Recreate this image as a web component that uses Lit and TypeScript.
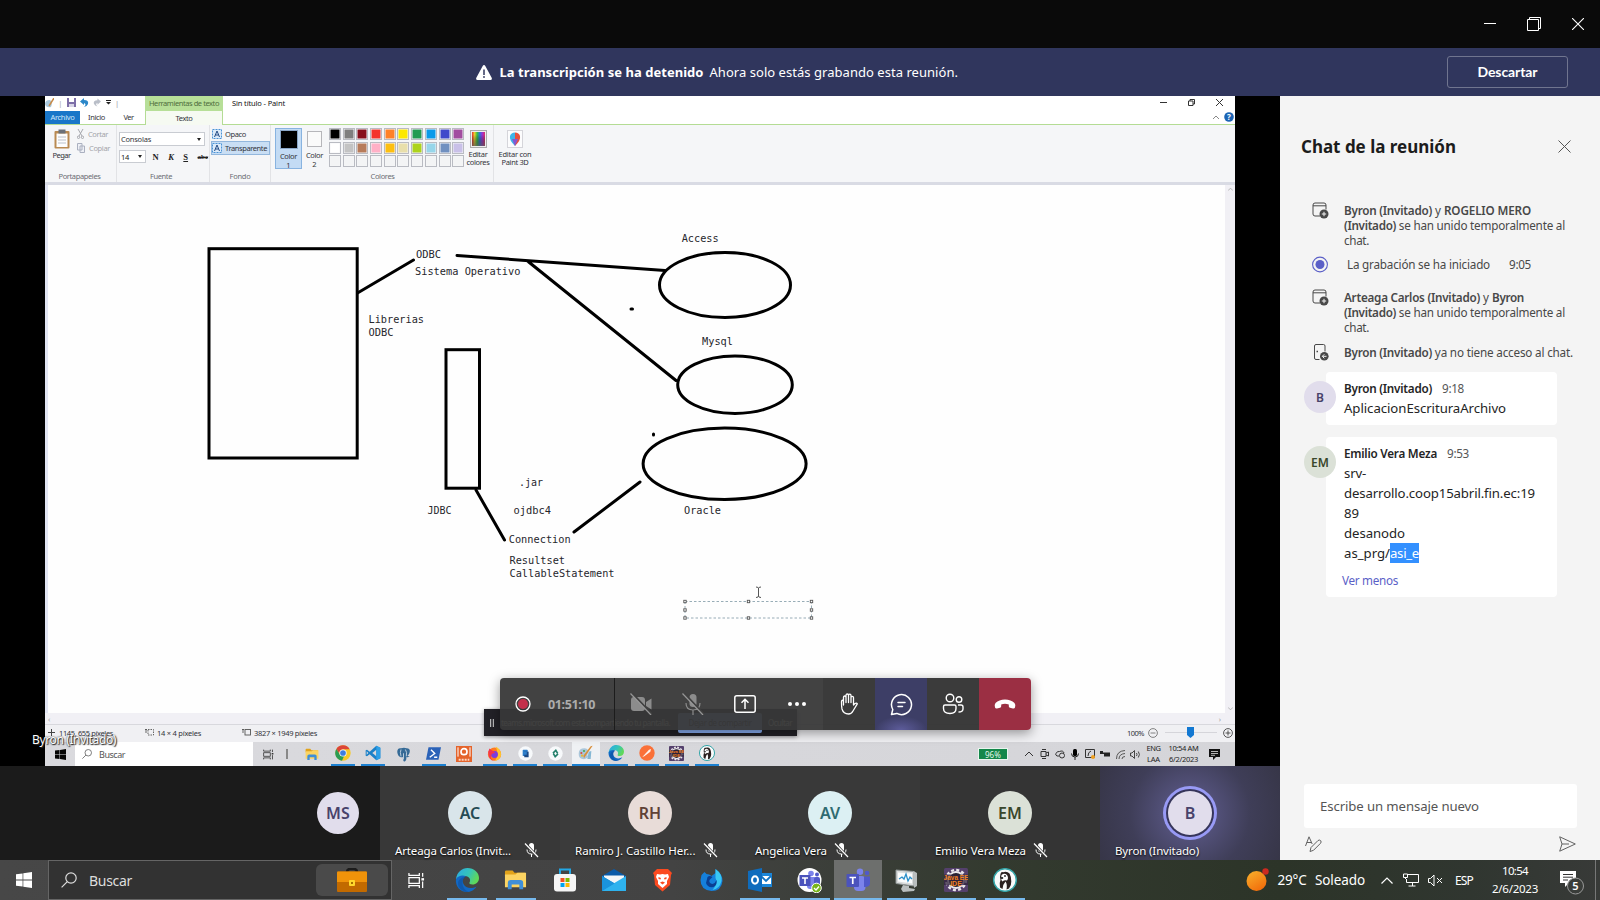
import { LitElement, html, svg, css } from "lit";

/** Text set to a given width: the letter spacing is derived from the natural width. */
class FitText extends LitElement {
  static properties = { text: { type: String }, w: { type: Number } };
  declare text: string;
  declare w: number;
  static styles = css`
    :host { display: inline-block; white-space: pre; flex: none; }
    .in { display: inline-block; }
  `;
  updated() {
    const el = this.renderRoot.querySelector(".in") as HTMLElement;
    el.style.letterSpacing = "0px";
    const n = el.getBoundingClientRect().width;
    if (this.w) el.style.letterSpacing = (this.w - n) / this.text.length + "px";
  }
  render() {
    return html`<span class="in">${this.text}</span>`;
  }
}
customElements.define("fit-text", FitText);

const f = (text: string, w = 0, cls = "") => html`<fit-text class=${cls} .text=${text} .w=${w}></fit-text>`;

const label = (text: string, x: number, y: number, w: number) =>
  svg`<text x=${x} y=${y} textLength=${w} lengthAdjust="spacingAndGlyphs">${text}</text>`;

const edge = (s: number) => html`<svg width=${s} height=${s} viewBox="0 0 24 24">
  <defs><linearGradient id="e1" x1="0" y1="0" x2="1" y2=".4"><stop offset="0" stop-color="#2aa9e8"/><stop offset=".6" stop-color="#35c4b8"/><stop offset="1" stop-color="#5fd85a"/></linearGradient></defs>
  <path d="M1 11C2 4 7 0 12.500 0C19 0 24 4.500 24 10C24 14 21 16.500 17.500 16.500C15 16.500 14 15.500 14.500 14.500C16 12 14.500 8 10 8C5 8 1.500 10 1 13Z" fill="url(#e1)"/>
  <path d="M1 11C3 7.500 8 6.500 11 8.300C8 9.500 7 13 8.500 16C10.500 20 16 21.500 21.500 18.500C19 22.500 15.500 24 12 24C5 24 0 18 1 11Z" fill="#1268c3"/>
  <path d="M8.500 11C6 15 8 22 14 23.800C9 24.500 3 21 3 15.500C3 12 6 9 10.500 9Z" fill="#0d4f9e" opacity=".6"/></svg>`;
const folder = (w: number, h: number) => html`<svg width=${w} height=${h} viewBox="0 0 24 24" preserveAspectRatio="none">
  <path d="M1 3Q1 1.500 2.500 1.500H9L11 4H22V8H1Z" fill="#e2a31a"/><path d="M1 6H12L14 4H23V20H1Z" fill="#fcd462"/>
  <path d="M4 22V15Q4 12 7 12H17Q20 12 20 15V22H16V17H8V22Z" fill="#3f8fd8"/></svg>`;
const taskView = (s: number) => html`<svg width=${s} height=${s} viewBox="0 0 18 18" fill="none" stroke="currentColor" stroke-width="1.300">
  <path d="M1 1V3.500H12V1M1 17V14.500H12V17M1 6H12V12H1ZM15.500 1V5M15.500 10V17"/><path d="M14.200 6.500H17V9H14.200Z" fill="currentColor" stroke="none"/></svg>`;
const winLogo = (s: number) => html`<svg width=${s} height=${s} viewBox="0 0 16 16" fill="currentColor"><path d="M0 2.300L6.600 1.400V7.600H0ZM7.300 1.300L16 0V7.600H7.300ZM0 8.400H6.600V14.600L0 13.700ZM7.300 8.400H16V16L7.300 14.700Z"/></svg>`;
const lens = (s: number) => html`<svg width=${s} height=${s} viewBox="0 0 16 16" fill="none" stroke="currentColor" stroke-width="1.200"><circle cx="10" cy="6" r="5.200"/><path d="M6.300 9.700L.6 15.400"/></svg>`;
const eclipseIcon = (s: number) => html`<svg width=${s} height=${s} viewBox="0 0 24 24"><rect width="24" height="24" rx="1.500" fill="#54406c"/>
  <circle cx="12" cy="12" r="8" fill="#262030" stroke="#e9e6ea" stroke-width="2"/><circle cx="12" cy="12" r="10" fill="none" stroke="#e9e6ea" stroke-width="2.400" stroke-dasharray="3 2.230"/>
  <rect y="6.500" width="24" height="10.500" fill="#30233c" opacity=".75"/>
  <text x="12" y="11.500" font-family="Liberation Sans" font-weight="bold" font-size="6.500" fill="#f08020" text-anchor="middle">Java EE</text>
  <text x="12" y="18" font-family="Liberation Sans" font-weight="bold" font-size="7" fill="#f08020" text-anchor="middle">IDE</text></svg>`;
const beaver = (s: number) => html`<svg width=${s} height=${s} viewBox="0 0 24 24"><circle cx="12" cy="12" r="11.300" fill="#fbfbfb" stroke="#35a5a8" stroke-width="1.500"/>
  <path d="M7.500 6Q8 3.500 10 4.200Q14 2.800 16.500 5.500Q18.500 9 18.300 13.500Q18.500 17.500 16 20.500L13.500 21.500Q14.500 16 12.500 13.500Q10 16 9.500 21L7 19.500Q6 15 7.500 12Q6.500 9 7.500 6Z" fill="#2b2120"/>
  <path d="M8.500 7Q11.500 4.500 14 7Q16 10 14 12.500Q11.500 11.500 9.500 13.500Q7.500 12 8.500 7Z" fill="#fff"/><circle cx="12" cy="8" r=".9" fill="#222"/><ellipse cx="9" cy="10" rx="1.300" ry="1" fill="#222"/></svg>`;
const foxIcon = (s: number) => html`<svg width=${s} height=${s} viewBox="0 0 24 24"><circle cx="12" cy="13" r="10.500" fill="#ff7a1f"/><path d="M14 1C19 3 23 8 22.500 14C22 20 17 23.500 12 23.500C16 20 19 14 14 1Z" fill="#ffc52e"/><circle cx="12" cy="13.500" r="5.500" fill="#7a3ce0"/><path d="M2 9L4 4L8 7Q12 8 13 11Q8 11 7 14Q4 22 12 23.500Q2 23 2 9Z" fill="#f4364c"/></svg>`;
const micOff = html`<svg width="15" height="16" viewBox="0 0 15 16"><rect x="5" y="1" width="5" height="9" rx="2.500" fill="#fff"/><path d="M3 7.500Q3 12 7.500 12Q12 12 12 7.500M7.500 12V15" fill="none" stroke="#fff"/><path d="M1.500 2L13.500 15" stroke="#383838" stroke-width="3"/><path d="M1 1.500L14 15" stroke="#fff" stroke-width="1.200"/></svg>`;

const colors = [
  "#000000", "#7f7f7f", "#880f1c", "#f5342c", "#ff8128", "#fde800", "#229b52", "#0a9aea", "#4048cb", "#a24da0",
  "#ffffff", "#c3c3c3", "#b77b5a", "#ffb0c6", "#fdbf10", "#e8dfab", "#add31c", "#97d6ea", "#7090c0", "#c9c0e8",
  ...Array(10).fill("#f3f4f5"),
];

const sharedApps: [unknown, boolean, boolean?][] = [
  [folder(14, 13), false],
  [html`<svg width="16" height="16" viewBox="0 0 24 24"><circle cx="12" cy="12" r="11.500" fill="#f7c928"/><path d="M2 6A11.500 11.500 0 0 1 22 6.500H12A5.500 5.500 0 0 0 7 14Z" fill="#dc4437"/><path d="M2 6L8 15.500L13.500 17L10.500 23.500A11.500 11.500 0 0 1 2 6Z" fill="#2b9c53"/><circle cx="12" cy="12" r="5.400" fill="#fff"/><circle cx="12" cy="12" r="4.300" fill="#3d7de0"/></svg>`, true],
  [html`<svg width="16" height="16" viewBox="0 0 24 24"><path d="M17 1L23 4V20L17 23L7 14L3 17L1 16V8L3 7L7 10Z" fill="#1b80c8"/><path d="M17 7V17L11 12Z" fill="#d8d9dd"/><path d="M2.500 9.500V14.500L5 12Z" fill="#d8d9dd"/><path d="M17 1L23 4V20L17 23Z" fill="#2da0e8"/></svg>`, true],
  [html`<svg width="15" height="15" viewBox="0 0 24 24"><path d="M2 8Q2 1 8 2Q13 0 17 2Q23 2 22 8Q20 14 18 14Q20 15 22 15Q19 17 16.500 16Q17 22 14 23Q11 24 11 16Q8 17 7 16Q3 15 2 8Z" fill="#356a96"/><path d="M8 4Q6 8 8 15M15 4Q18 8 16.500 15M12 10V20" stroke="#d5e0ea" fill="none" stroke-width="1.300"/></svg>`, false],
  [html`<svg width="15" height="13" viewBox="0 0 24 20"><path d="M4 0H24L20 20H0Z" fill="#2a62b8"/><path d="M8 4L14 10L6 16M13 16H18" stroke="#fff" stroke-width="2.200" fill="none"/></svg>`, true],
  [html`<svg width="16" height="16" viewBox="0 0 24 24"><rect width="24" height="24" fill="#e5632a"/><path d="M3 2V16M21 2V16" stroke="#fff" stroke-width="1.500"/><circle cx="12" cy="8.500" r="4.500" fill="none" stroke="#fff" stroke-width="2.500"/><path d="M4 20.500H20" stroke="#ffd5be" stroke-width="3" stroke-dasharray="3 1.500"/></svg>`, false],
  [foxIcon(15), true],
  [html`<svg width="15" height="15" viewBox="0 0 24 24"><circle cx="12" cy="12" r="11.500" fill="#f7f9fb"/><rect x="7.500" y="6" width="8" height="10" rx="1" fill="#2b7cc8"/><path d="M10 9H17V18H10Z" fill="#1c4a86"/><path d="M9 9H14V14H9Z" fill="#2f80cc"/></svg>`, true],
  [html`<svg width="15" height="15" viewBox="0 0 24 24"><circle cx="12" cy="12" r="11.500" fill="#f7f9fb"/><path d="M8 11.500L12.500 7L15.500 12M16 12.500L11.500 17L8.500 12" fill="none" stroke="#24806c" stroke-width="2.600"/></svg>`, true],
  [html`<svg width="16" height="16" viewBox="0 0 24 24"><path d="M1 13Q1 5 10 5Q17 6 15 12Q13 14 15 18Q12 22 7 21Q1 20 1 13Z" fill="#aac6da"/><circle cx="5" cy="12" r="1.600" fill="#d84b3e"/><circle cx="9" cy="9" r="1.600" fill="#48a850"/><circle cx="6" cy="16" r="1.600" fill="#e5ba35"/><path d="M22 1L11 17L9 20L8 16L19 2Z" fill="#d98f3c"/><path d="M16 10L14 21H19L20 9Z" fill="#86b8d4"/></svg>`, true, true],
  [edge(16), true],
  [html`<svg width="16" height="16" viewBox="0 0 24 24"><circle cx="12" cy="12" r="11.500" fill="#fa7038"/><path d="M5 18L15 7L18 6L17 10L8 17Z" fill="#fff" opacity=".9"/></svg>`, true],
  [eclipseIcon(15), true],
  [beaver(16), true],
];

const hostApps: { w: number; icon: unknown; run?: boolean; active?: boolean; cls?: string }[] = [
  { w: 49, run: true, icon: edge(24) },
  { w: 49, run: true, icon: folder(23, 22) },
  { w: 49, icon: html`<svg width="24" height="24" viewBox="0 0 24 24"><path d="M7 7V1.500H17V7" fill="none" stroke="#23a8e6" stroke-width="2"/><rect x="1" y="6" width="22" height="17.500" rx="3" fill="#f5f5f5"/><path d="M7.500 10H11.500V14H7.500Z" fill="#f25022"/><path d="M12.500 10H16.500V14H12.500Z" fill="#7fba00"/><path d="M7.500 15H11.500V19H7.500Z" fill="#00a4ef"/><path d="M12.500 15H16.500V19H12.500Z" fill="#ffb900"/></svg>` },
  { w: 49, icon: html`<svg width="24" height="24" viewBox="0 0 24 24"><path d="M0 8L12 1L24 8V14H0Z" fill="#0a5aa8"/><path d="M2 7.500H22V16H2Z" fill="#f3f6f8"/><path d="M0 8L24 22V23H0Z" fill="#1583cf"/><path d="M24 8L0 22.500V23H24Z" fill="#2eb2ee"/><path d="M0 8L12.500 15.500L0 23Z" fill="#1a93dc"/></svg>` },
  { w: 49, icon: html`<svg width="21" height="24" viewBox="0 0 21 24"><path d="M5 1H16L20 5L19 7L18 17L10.500 23.500L3 17L2 7L1 5Z" fill="#fb4a20"/><path d="M5 6L8 6.500L10.500 6L13 6.500L16 6L17 9L15 13V16L10.500 20L6 16V13L4 9Z" fill="#fff"/><path d="M6.500 9L9 10L8.500 11.500L6.500 11ZM14.500 9L12 10L12.500 11.500L14.500 11ZM8 14.500L10.500 13.500L13 14.500L10.500 16.500Z" fill="#fb4a20"/></svg>` },
  { w: 48, icon: html`<svg width="25" height="24" viewBox="0 0 24 24"><path d="M2 7L5 4L7 6Q10 6 12 8L16 5V1Q23 6 23 13Q22 23 12 23Q1 22 1 12Z" fill="#1580dc"/><path d="M16 1Q23 6 22 13Q20 21 13 22Q19 15 16 10Z" fill="#39c7f4"/><path d="M8 9Q10 7 13 9L10 12Q9 15 13 16Q16 15 17 12Q18 17 14 19Q8 20 6.500 15Z" fill="#0b3f92"/></svg>` },
  { w: 50, run: true, icon: html`<svg width="24" height="24" viewBox="0 0 24 24"><path d="M13 5H24V19H13Z" fill="#fff"/><path d="M12 5H24V19H12Z" fill="#1c86d8"/><path d="M13 8H23V16H13Z" fill="#fff"/><path d="M13 8L18 13L23 8" stroke="#1274c4" stroke-width="1.800" fill="none"/><path d="M0 3L14 0V24L0 21Z" fill="#0f6cbd"/><ellipse cx="7" cy="12" rx="3" ry="3.700" fill="none" stroke="#fff" stroke-width="2"/></svg>` },
  { w: 49, run: true, icon: html`<svg width="25" height="25" viewBox="0 0 25 25"><circle cx="12.500" cy="12" r="12" fill="#fff"/><circle cx="14" cy="5.500" r="2.800" fill="#7b83eb"/><circle cx="20" cy="6.500" r="2" fill="#5059c9"/><rect x="10" y="9" width="10" height="12" rx="3" fill="#7b83eb"/><rect x="17" y="9" width="6" height="9" rx="2" fill="#5059c9"/><rect x="2.500" y="7" width="11" height="11" fill="#4b53bc"/><path d="M5 10H11M8 10V16" stroke="#fff" stroke-width="1.600"/><circle cx="19.500" cy="20" r="4.800" fill="#78b51c" stroke="#fff"/><path d="M17 20L19 22L22 18.500" stroke="#fff" fill="none" stroke-width="1.300"/></svg>` },
  { w: 48, run: true, active: true, icon: html`<svg width="25" height="24" viewBox="0 0 25 24"><circle cx="14" cy="3.800" r="3.200" fill="#7b83eb"/><circle cx="21" cy="5" r="2.300" fill="#5059c9"/><rect x="8" y="8" width="11.500" height="15" rx="4" fill="#7b83eb"/><path d="M18 8.500H24V16Q23 19.500 18 19Z" fill="#5059c9"/><rect x=".5" y="6" width="12.500" height="13" rx="1" fill="#4b53bc"/><path d="M3.500 9.500H10M6.750 9.500V16" stroke="#fff" stroke-width="1.700"/></svg>` },
  { w: 49, run: true, icon: html`<svg width="24" height="24" viewBox="0 0 24 24"><path d="M1 2L19 3.500V18L1 15.500Z" fill="#d9dcdc" stroke="#8d9494"/><path d="M3 4.500L17 5.500V15.500L3 13.500Z" fill="#fafcfc"/><path d="M4 11L7 9L9 11L11 6L13 13L15 9L17 11" fill="none" stroke="#2a8fc9" stroke-width="1.300"/><path d="M18.500 3L22 5V18L19 20ZM8 17L14 18V20L20 21L19 23L8 24L6 21Z" fill="#b9bebe"/></svg>` },
  { w: 49, run: true, icon: eclipseIcon(24) },
  { w: 49, run: true, icon: beaver(24) },
];

const joinIcon = html`<svg width="17" height="17" viewBox="0 0 17 17"><path d="M8 14H3Q1 14 1 12V3Q1 1 3 1H12Q14 1 14 3V7.500M1 3.800H14" fill="none" stroke="#484848"/><circle cx="12" cy="12" r="4.500" fill="#484848"/><path d="M9.800 12H14.200M12 9.800V14.200" stroke="#f4f4f4"/></svg>`;
const leaveIcon = html`<svg width="17" height="17" viewBox="0 0 17 17"><path d="M7.500 15.500H4Q2.500 15.500 2.500 14V2Q2.500 .5 4 .5H11.500Q13 .5 13 2V7.500" fill="none" stroke="#484848"/><path d="M4.500 7.500H6" stroke="#484848" stroke-width="1.500"/><circle cx="12.300" cy="12.300" r="4.300" fill="#484848"/><path d="M14.500 12.300H10.500M12.300 10.300L10.300 12.300L12.300 14.300" stroke="#f4f4f4" fill="none"/></svg>`;

class AppRoot extends LitElement {
  static styles = css`
    :host { display: block; width: 1600px; height: 900px; overflow: hidden; font-family: "Noto Sans", "Open Sans", sans-serif; background: #000; }
    * { box-sizing: border-box; }
    svg { display: block; flex: none; }
    .page { display: grid; grid-template-rows: 48px 48px 764px 40px; width: 1600px; height: 900px; }
    .row { display: flex; align-items: center; }
    .win { background: #0a0a0a; display: flex; justify-content: flex-end; align-items: center; gap: 31px; padding-right: 16px; }
    .banner { background: #30365d; color: #fff; display: flex; align-items: center; padding-left: 476px; font-size: 13px; }
    .banner .b { font-weight: 700; margin: 0 6px 0 7.500px; }
    .dismiss { width: 121px; height: 32px; border: 1px solid #70758f; border-radius: 3px; margin-left: 489px; display: flex; align-items: center; justify-content: center; padding-bottom: 1px; font: 700 14px "Lato", "Noto Sans", sans-serif; }
    .body { display: grid; grid-template-columns: 1280px 320px; }
    .left { display: grid; grid-template-rows: 670px 94px; position: relative; }
    .stage { background: #000; padding: 0 45px; }
    .share { width: 1190px; height: 670px; background: #fff; display: grid; grid-template-rows: 15px 14px 57px 3px 528px 12px 17px 24px; overflow: hidden; font-size: 7.500px; color: #33343a; }

    .ptitle { display: flex; background: #fff; padding-bottom: 2px; }
    .quick { width: 100px; display: flex; align-items: center; gap: 4.300px; padding-left: 0; color: #999; }
    .ctx { width: 78px; background: #b7df98; color: #4f6e3d; display: flex; align-items: center; justify-content: center; height: 15px; padding-bottom: 2px; }
    .pname { padding-left: 9px; display: flex; align-items: center; flex: 1; color: #111; }
    .pwin { display: flex; align-items: center; gap: 21px; padding-right: 12px; color: #222; }
    .ptabs { display: flex; align-items: stretch; border-bottom: 1px solid #b4dc94; }
    .ptabs > div { display: flex; align-items: center; justify-content: center; padding-bottom: 1px; }
    .ptabs .file { width: 35px; background: #1976c8; color: #cfe6fa; }
    .t2 { width: 33px; } .t3 { width: 32px; }
    .ptabs .t3 { padding-right: 1px; }
    .t4 { width: 78px; background: #f6faf2; border: 1px solid #b4dc94; border-width: 0 1px; height: 14px; }
    .help { margin-left: auto; gap: 5px; padding-right: 1px; }
    .ribbon { background: #f5f6f8; display: flex; }
    .grp { display: flex; flex-direction: column; border-right: 1px solid #e2e3e6; }
    .gbody { height: 45px; display: flex; }
    .gname { display: flex; justify-content: center; color: #6b6d73; line-height: 11px; padding-top: .5px; }
    .g1 { width: 72px; } .g2 { width: 93px; } .g3 { width: 61px; } .g4 { width: 223px; } .g5 { width: 42px; border: 0; }
    .g1 .gname { padding-right: 2px; } .g2 .gname { padding-right: 4px; } .g4 .gname { padding-left: 1px; }
    .g1 .paste { width: 33px; padding-top: 4px; display: flex; flex-direction: column; align-items: center; gap: 1px; line-height: 10px; }
    .g1 .cc { display: flex; flex-direction: column; gap: 4px; padding-top: 4px; color: #a3a4aa; line-height: 10px; margin-left: -1px; }
    .g1 .cc .row { gap: 4px; }
    .fonts { display: flex; flex-direction: column; gap: 4px; padding: 7px 0 0 2px; }
    .combo { background: #fff; border: 1px solid #c9ccd2; display: flex; align-items: center; justify-content: space-between; padding: 0 3px 0 1px; height: 14px; }
    .combo.a { width: 86px; } .combo.c { width: 27px; }
    .fmt { gap: 9.500px; font: 700 8.500px "Liberation Serif", serif; color: #222; }
    .fmt .combo { font: 7.500px "Noto Sans", sans-serif; margin-right: -3px; height: 13px; }
    .fmt .combo, .fmt span { flex: none; }
    .k { font-style: italic; } .s { text-decoration: underline; } .st { text-decoration: line-through; font-size: 7px; }
    .bg { display: flex; flex-direction: column; padding: 2px 0 0 1px; }
    .bg .row { height: 14px; gap: 3px; padding-left: 1px; width: 59px; }
    .bg .on { background: #c9def4; border: 1px solid #93b7dd; padding-left: 0; }
    .cbtn { width: 27px; height: 41px; margin-top: 3px; display: flex; flex-direction: column; align-items: center; padding-top: 2px; line-height: 8.500px; text-align: center; }
    .c1 { background: #c3dbf4; border: 1px solid #88b3e0; margin-left: 4px; padding-top: 1px; }
    .sw { width: 18px; height: 19px; background: #000; border: 1px solid #8ba7c8; margin-bottom: 3px; flex: none; }
    .sw.e { width: 15px; height: 16px; background: #fafafa; border-color: #b6b6ba; margin: 1px 0 4px; }
    .cbtn:nth-child(2) { margin-left: -1px; }
    .pal { display: grid; grid-template-columns: repeat(10, 12px); grid-auto-rows: 12px; gap: 1.700px; margin: 3px 0 0 1px; width: 136px; }
    .pal i { border: 1px solid #b9bbc2; display: block; box-shadow: inset 0 0 0 .5px #f5f6f8; }
    .tall { width: 30px; display: flex; flex-direction: column; align-items: center; padding-top: 5px; gap: 2px; line-height: 8.300px; text-align: center; }
    .g4 .tall { width: 26px; } .g5 .tall { width: 42px; }
    .shade { background: #d9dbe4; }
    .canvasrow { display: grid; grid-template-columns: 3px 1177px 10px; background: #f1f0f5; }
    .edge { background: #e2e5f3; }
    .paper { background: #fefefe; }
    .paper text { font: 10px "DejaVu Sans Mono", monospace; fill: #26262c; }
    .scroll { display: flex; flex-direction: column; justify-content: space-between; align-items: center; padding: 2px 0; color: #999; }
    .hs { background: #f1f0f5; display: flex; justify-content: space-between; align-items: center; padding: 0 14px 0 3px; color: #999; border-bottom: 1px solid #d8d8dd; }
    .status { background: #f0f0f3; display: flex; align-items: center; padding: 0 0 2px 3px; }
    .status .s1 { width: 97px; gap: 4px; } .status .s2 { width: 97px; gap: 3px; } .status .s3 { flex: 1; gap: 3px; }
    .zoomer { gap: 4px; padding-right: 2px; }
    .track { width: 57px; display: flex; justify-content: center; background: linear-gradient(#d5d5da, #d5d5da) center / 52px 1px no-repeat; }
    .stask { background: linear-gradient(90deg, #dadade, #d5d5d9); display: flex; align-items: center; }
    .stask > * { flex: none; }
    .swin { width: 30px; display: flex; justify-content: center; color: #050505; }
    .ssearch { width: 178px; height: 24px; background: #fff; display: flex; align-items: center; gap: 7px; padding-left: 7px; color: #555; font-size: 9px; }
    .stv { width: 30px; display: flex; justify-content: center; color: #333; }
    .sbar { width: 2px; height: 10px; background: #888; margin-left: 3px; margin-right: 9.200px; }
    .sapp { width: 30.380px; height: 24px; display: flex; align-items: center; justify-content: center; }
    .sapp > div { width: 24px; height: 24px; display: flex; align-items: center; justify-content: center; }
    .sapp.run > div { border-bottom: 2px solid #1c80d0; }
    .sapp.act > div { background: #eff1f4; width: 28px; }
    .pct { background: #14874a; border: 1px solid #e9f5ee; color: #e3f6ea; width: 30px; height: 12px; display: flex; align-items: center; justify-content: center; margin-left: 255.500px; font-size: 8px; }
    .tray { gap: 5px; margin-left: 14.500px; color: #333; }
    .tcol { display: flex; flex-direction: column; align-items: center; line-height: 11px; font-size: 7.500px; color: #222; }

    .who { position: absolute; left: 32px; top: 634px; color: #fff; font-size: 12px; line-height: 20px; text-shadow: 0 0 2px #000, 1px 1px 1px #333; }
    .sharing { position: absolute; left: 484px; top: 613px; width: 313px; height: 27px; background: #222127; color: #eee; display: flex; align-items: center; font-size: 8px; padding-left: 6px; box-shadow: 0 1px 4px #0006; }
    .sharing .msg { margin: 0 8px 0 7px; }
    .stop { width: 84px; height: 20px; background: #8ab0f5; color: #223; display: flex; align-items: center; justify-content: center; margin-right: 6px; border-radius: 2px; }
    .bar { position: absolute; left: 500px; top: 582px; width: 531px; height: 52px; display: flex; border-radius: 4px; overflow: hidden; box-shadow: 0 3px 12px #0006; z-index: 2; }
    .bar > div { width: 52px; display: flex; align-items: center; justify-content: center; background: rgba(56, 56, 56, .95); }
    .bar .rec { width: 115px; gap: 17px; justify-content: flex-start; padding-left: 15px; border-right: 1px solid #1c1c1c; color: #acacac; font-weight: 700; font-size: 12.500px; }
    .bar .hand, .bar .ppl { background: rgba(51, 51, 51, .96); }
    .bar .chat { background: radial-gradient(ellipse 26px 14px at 50% 100%, #5d5c9b, #3d3e66); }
    .bar .hang { background: #9b2f43; }

    .strip { display: grid; grid-template-columns: 380px repeat(5, 180px); background: #1b1b1b; color: #fff; }
    .tile { display: flex; flex-direction: column; align-items: center; padding-top: 25px; }
    .tile .nm { align-self: flex-start; padding-left: 15px; display: flex; align-items: center; gap: 12.500px; font-size: 11.500px; height: 16px; margin-top: 7px; text-shadow: 0 1px 2px #000; }
    .tile .nm.g8 { gap: 7px; }
    .av { width: 44px; height: 44px; border-radius: 50%; display: flex; align-items: center; justify-content: center; font-weight: 600; font-size: 16px; flex: none; }
    .me .av { box-shadow: 0 0 0 2px #36355a, 0 0 0 5px #989af5; }
    .first { padding: 26px 0 0 317px; }
    .first .av { width: 42px; height: 42px; }
    .a0 { background: #383838; } .a1 { background: #3b3b3b; } .a2 { background: #393939; } .a3 { background: #343434; }
    .me { background: radial-gradient(circle at 50% 50%, #56547f 0 20px, #3f3e58 60px, #373648 100px); }
    .lav { background: #e1ddec; color: #48426a; } .blu { background: #d9e5ea; color: #264a53; } .pin { background: #e8dcd8; color: #5f4136; }
    .cya { background: #dcf0f3; color: #2f6b70; } .grn { background: #dbe1d7; color: #39472b; }

    .chatp { background: #f4f4f4; display: flex; flex-direction: column; color: #484848; font-size: 11.700px; line-height: 15px; }
    .chead { display: flex; justify-content: space-between; align-items: center; padding: 0 29.500px 0 21px; height: 28px; margin-top: 37px; color: #1c1c1c; font-size: 17px; font-weight: 700; line-height: 28px; }
    .chead svg { margin-bottom: 2px; }
    .sys { display: grid; grid-template-columns: 32px 1fr; padding-left: 32px; }
    .sys .b { font-weight: 600; }
    .sys.y1 svg, .sys.y3 svg { margin-top: -1px; }
    .ln { display: flex; height: 15px; align-items: center; }
    .y1 { margin-top: 42px; } .y2 { margin-top: 8px; } .y3 { margin-top: 17px; } .y4 { margin-top: 10px; }
    .y2 .ln { padding-left: 3px; height: 17px; gap: 19px; }
    .y4 svg { margin-top: -1px; height: 17px; margin-bottom: -1px; }
    .m { display: flex; padding-left: 24px; }
    .m .av { width: 32px; height: 32px; font-size: 12px; margin-top: 9px; position: relative; z-index: 1; }
    .card { width: 231px; background: #fff; border-radius: 4px; margin-left: -10px; padding: 8px 0 0 18px; color: #242424; }
    .hd { display: flex; align-items: center; gap: 10px; height: 16px; margin-bottom: 2px; }
    .hd .b { font-weight: 600; } .hd .t { color: #555; }
    .tx { font-size: 13.200px; height: 20px; line-height: 20px; display: flex; }
    .c-a { height: 53px; }
    .m1 { margin-top: 12px; } .m2 { margin-top: 12px; }
    .c-b { height: 160px; }
    .sel { background: #3390ff; color: #fff; }
    .more { color: #5b5fc7; margin: 10px 0 0 -2px; height: 15px; display: flex; align-items: center; }
    .fill { flex: 1; }
    .compose { margin: 0 23px 0 24px; height: 44px; background: #fff; border-radius: 3px; display: flex; align-items: center; padding-left: 16px; font-size: 13.200px; color: #555; }
    .tools { height: 32px; display: flex; justify-content: space-between; align-items: center; padding: 0 24px 0 25px; }

    .task { background: linear-gradient(90deg, #474747 0, #434343 42%, #333a2f 62%, #2c3428 80%, #303630 92%, #383a38 100%); color: #fff; display: flex; align-items: center; }
    .start { width: 48px; display: flex; justify-content: center; }
    .search { width: 344px; height: 40px; background: #323232; border: 1px solid #656565; display: flex; align-items: center; padding: 0 3px 0 12px; font-size: 14px; color: #ddd; }
    .search .q { margin-left: 12px; }
    .hl { margin-left: auto; width: 72px; height: 32px; border-radius: 6px; background: #4a4a4a; display: flex; align-items: center; justify-content: center; }
    .tv { width: 50px; display: flex; justify-content: center; padding-right: 2px; }
    .app { height: 40px; display: flex; justify-content: center; }
    .app > div { width: 40px; height: 40px; display: flex; align-items: center; justify-content: center; }
    .app.run > div { border-bottom: 2px solid #76b9ed; padding-top: 2px; }
    .app.act > div { width: 48px; background: #6d6f6d; }
    .wx { margin-left: 217px; gap: 8.500px; font-size: 13.500px; }
    .tr { margin-left: 16px; font-size: 12px; }
    .clock { display: flex; flex-direction: column; align-items: center; font-size: 11.500px; line-height: 18px; width: 52px; margin-left: 16px; padding-bottom: 1px; }
    .note { margin-left: 18px; padding-top: 3px; }
    .desk { width: 1px; height: 40px; background: #777; margin-left: auto; margin-right: 4px; }
  `;

  private tile(ini: string, tone: string, name: string, w: number, bg: string, gap = "") {
    return html`<div class="tile ${bg}"><div class="av ${tone}">${ini}</div>
      <div class="nm ${gap}">${f(name, w)}${bg === "me" ? "" : micOff}</div></div>`;
  }

  private ribbon() {
    return html`<div class="ribbon">
      <div class="grp g1"><div class="gbody">
        <div class="paste"><svg width="16" height="20" viewBox="0 0 16 20"><rect x=".5" y="2" width="15" height="17.500" rx="1" fill="#b98a52"/><rect x="2.500" y="4.500" width="11" height="13.500" fill="#fdfdfd"/><rect x="4.500" y=".5" width="7" height="4" fill="#6b7179"/><path d="M4 8H12M4 11H12M4 14H12" stroke="#b9c1cc"/></svg>${f("Pegar", 18)}</div>
        <div class="cc"><div class="row"><svg width="7" height="10" viewBox="0 0 7 10" fill="none" stroke="#a5a7ad"><path d="M1 0L5 7M6 0L2 7"/><circle cx="1.500" cy="8.300" r="1.200"/><circle cx="5.500" cy="8.300" r="1.200"/></svg>${f("Cortar", 20)}</div>
        <div class="row"><svg width="8" height="10" viewBox="0 0 8 10" fill="#eef0f6" stroke="#aab0c0"><path d="M.5 .5H5V7H.5ZM3 3H7.500V9.500H3Z"/></svg>${f("Copiar", 21)}</div></div>
      </div><div class="gname">${f("Portapapeles", 42)}</div></div>
      <div class="grp g2"><div class="gbody"><div class="fonts">
        <div class="combo a">${f("Consolas", 30)}<svg width="4" height="3" viewBox="0 0 4 3"><path d="M0 0H4L2 3Z" fill="#222"/></svg></div>
        <div class="row fmt"><div class="combo c">${f("14", 8)}<svg width="4" height="3" viewBox="0 0 4 3"><path d="M0 0H4L2 3Z" fill="#222"/></svg></div><span>N</span><span class="k">K</span><span class="s">S</span><span class="st">abc</span></div>
      </div></div><div class="gname">${f("Fuente", 22)}</div></div>
      <div class="grp g3"><div class="gbody"><div class="bg">
        ${[["Opaco", 21, ""], ["Transparente", 42, "on"]].map(([t, w, c]) => html`<div class="row ${c}"><svg width="10" height="10" viewBox="0 0 10 10"><rect x=".5" y=".5" width="9" height="9" fill="#dcebfa" stroke="#4b93d6" stroke-dasharray="2 1"/><path d="M2.500 8L5 2L7.500 8M3.500 6H6.500" fill="none" stroke="#234a84"/></svg>${f(t as string, w as number)}</div>`)}
      </div></div><div class="gname">${f("Fondo", 21)}</div></div>
      <div class="grp g4"><div class="gbody">
        <div class="cbtn c1"><div class="sw"></div>${f("Color", 17)}<span>1</span></div>
        <div class="cbtn"><div class="sw e"></div>${f("Color", 17)}<span>2</span></div>
        <div class="pal">${colors.map((c) => html`<i style="background:${c}"></i>`)}</div>
        <div class="tall"><svg width="17" height="18" viewBox="0 0 17 18"><defs><linearGradient id="rb"><stop offset="0" stop-color="#e83030"/><stop offset=".2" stop-color="#e8d030"/><stop offset=".4" stop-color="#30c040"/><stop offset=".6" stop-color="#3070e0"/><stop offset=".8" stop-color="#a030d0"/><stop offset="1" stop-color="#e03060"/></linearGradient><linearGradient id="rk" x2="0" y2="1"><stop offset=".2" stop-opacity="0"/><stop offset="1" stop-color="#555" stop-opacity=".7"/></linearGradient></defs><rect x=".5" y=".5" width="16" height="17" fill="#eee" stroke="#aaa"/><rect x="2" y="2" width="13" height="14" fill="url(#rb)"/><rect x="2" y="2" width="13" height="14" fill="url(#rk)"/></svg><div>${f("Editar", 19)}<br>${f("colores", 23)}</div></div>
      </div><div class="gname">${f("Colores", 24)}</div></div>
      <div class="grp g5"><div class="gbody"><div class="tall"><svg width="16" height="18" viewBox="0 0 16 18"><rect x=".5" y=".5" width="15" height="17" fill="#fcfcfd" stroke="#d5d5da"/><path d="M8 16Q2 10 3 6Q4 2.500 8 2.500Z" fill="#3fb4e8"/><path d="M8 16Q14 10 13 6Q12 2.500 8 2.500Z" fill="#e8503c"/><path d="M5 9H11L8 16Z" fill="#8658d0"/></svg><div>${f("Editar con", 33)}<br>${f("Paint 3D", 27)}</div></div></div></div>
    </div>`;
  }

  private drawing() {
    const handles = [[685, 601.5], [748.5, 601.5], [811.5, 601.5], [685, 610], [811.5, 610], [685, 618], [748.5, 618], [811.5, 618]];
    return html`<svg width="1177" height="528" viewBox="48 185 1177 528">
      <g fill="none" stroke="#000" stroke-width="3" stroke-linecap="round">
        <rect x="209" y="248.700" width="148.200" height="209.300"/><rect x="446" y="349.700" width="33.500" height="138.500"/>
        <path d="M357.500 293L413.500 260M457 255.500L665 270.500M527.500 261L676 380.500M476 490L504.500 540M574 532L640 482"/>
        <ellipse cx="725" cy="285" rx="65.500" ry="32.500"/><ellipse cx="735" cy="384.700" rx="57.300" ry="28.700"/><ellipse cx="724.600" cy="463.800" rx="81.500" ry="35.700"/>
        <path d="M631 309H632.500M653.500 434V435"/>
      </g>
      ${label("ODBC", 416, 258, 25)}${label("Sistema Operativo", 415, 275, 105.5)}${label("Access", 681.7, 242, 37)}
      ${label("Librerias", 368.5, 322.5, 55.5)}${label("ODBC", 368.5, 336, 25)}${label("Mysql", 702, 345, 31)}
      ${label(".jar", 519, 485.5, 24)}${label("ojdbc4", 513.5, 513.5, 37.5)}${label("JDBC", 427.5, 513.5, 24)}${label("Oracle", 684, 513.5, 37)}
      ${label("Connection", 508.7, 543, 62)}${label("Resultset", 509.5, 563.5, 55.5)}${label("CallableStatement", 509.5, 576.5, 105)}
      <path d="M756 587Q758.500 587 758.500 588.500Q758.500 587 761 587M758.500 588V596M756 597.500Q758.500 597.500 758.500 596Q758.500 597.500 761 597.500" fill="none" stroke="#555"/>
      <rect x="685" y="601.500" width="126.500" height="16.500" fill="none" stroke="#7e98a4" stroke-width=".8" stroke-dasharray="2.500 2"/>
      ${handles.map(([x, y]) => svg`<rect x=${x - 1.2} y=${y - 1.2} width="2.400" height="2.400" fill="#fff" stroke="#555" stroke-width=".9"/>`)}
    </svg>`;
  }

  private share() {
    return html`<div class="share">
      <div class="ptitle">
        <div class="quick"><svg width="9" height="10" viewBox="0 0 9 10"><path d="M0 6Q0 2 5 2Q8 4 6 9Q1 10 0 6Z" fill="#a9c8dc"/><path d="M9 0L4 8" stroke="#c78a48" stroke-width="1.500"/></svg><span>|</span>
          <svg width="9" height="9" viewBox="0 0 9 9"><path d="M0 0H9V9H0Z" fill="#7d6fa8"/><path d="M2 0H7V4H2Z" fill="#fff"/><path d="M2 6H7V9H2Z" fill="#d9d6e8"/></svg>
          <svg width="9" height="9" viewBox="0 0 9 9"><path d="M0 3.500L4 0V2Q9 2 8 6Q7 8.500 4 9Q7 6 4 5V7Z" fill="#2b87c9"/></svg>
          <svg width="8" height="9" viewBox="0 0 9 9"><path d="M9 3.500L5 0V2Q0 2 1 6Q2 8.500 5 9Q2 6 5 5V7Z" fill="#b9bec8"/></svg>
          <svg width="5" height="5" viewBox="0 0 5 5"><path d="M0 0H5V1H0ZM0 2H5L2.500 4.500Z" fill="#222"/></svg><span>|</span></div>
        <div class="ctx">${f("Herramientas de texto", 70)}</div>
        <div class="pname">${f("Sin título - Paint", 53)}</div>
        <div class="pwin"><svg width="7" height="7" viewBox="0 0 7 7"><path d="M0 3.500H7" stroke="#333"/></svg><svg width="7" height="7" viewBox="0 0 7 7" fill="none" stroke="#333"><path d="M.5 2H5V6.500H.5ZM2 2V.5H6.500V5H5"/></svg><svg width="7" height="7" viewBox="0 0 7 7"><path d="M0 0L7 7M7 0L0 7" stroke="#333"/></svg></div>
      </div>
      <div class="ptabs"><div class="file">${f("Archivo", 24)}</div><div class="t2">${f("Inicio", 17)}</div><div class="t3">${f("Ver", 10)}</div><div class="t4">${f("Texto", 17)}</div>
        <div class="help"><svg width="6" height="4" viewBox="0 0 6 4"><path d="M0 4L3 1L6 4" fill="none" stroke="#888"/></svg><svg width="10" height="10" viewBox="0 0 10 10"><circle cx="5" cy="5" r="4.800" fill="#1c64b4"/><text x="5" y="7.800" text-anchor="middle" font-size="8" font-weight="bold" fill="#fff">?</text></svg></div></div>
      ${this.ribbon()}
      <div class="shade"></div>
      <div class="canvasrow"><div class="edge"></div><div class="paper">${this.drawing()}</div>
        <div class="scroll"><svg width="5" height="4" viewBox="0 0 6 4"><path d="M0 4L3 1L6 4" fill="none" stroke="#aaa"/></svg><svg width="5" height="4" viewBox="0 0 6 4"><path d="M0 0L3 3L6 0" fill="none" stroke="#aaa"/></svg></div></div>
      <div class="hs"><span>‹</span><span>›</span></div>
      <div class="status">
        <div class="row s1"><svg width="7" height="7" viewBox="0 0 7 7"><path d="M0 3.500H7M3.500 0V7" stroke="#444"/></svg>${f("1145, 655 píxeles", 54)}</div>
        <div class="row s2"><svg width="9" height="7" viewBox="0 0 9 7" fill="none" stroke="#555" stroke-width=".9"><path d="M0 .5H2M1 0V4"/><rect x="3" y=".5" width="5.500" height="5.500" stroke-dasharray="1.500 1"/></svg>${f("14 × 4 píxeles", 44)}</div>
        <div class="row s3"><svg width="9" height="7" viewBox="0 0 9 7" fill="none" stroke="#555" stroke-width=".9"><path d="M0 .5H2M1 0V4"/><rect x="3" y=".5" width="5.500" height="5.500"/></svg>${f("3827 × 1949 píxeles", 63)}</div>
        <div class="row zoomer">${f("100%", 17)}<svg width="10" height="10" viewBox="0 0 10 10" fill="none" stroke="#666" stroke-width=".8"><circle cx="5" cy="5" r="4.400"/><path d="M2.500 5H7.500"/></svg>
          <div class="track"><svg width="7" height="11" viewBox="0 0 7 11"><path d="M0 0H7V8L3.500 11L0 8Z" fill="#1278d2"/></svg></div><svg width="10" height="10" viewBox="0 0 10 10" fill="none" stroke="#444" stroke-width=".9"><circle cx="5" cy="5" r="4.400"/><path d="M2.500 5H7.500M5 2.500V7.500"/></svg></div>
      </div>
      <div class="stask">
        <div class="swin">${winLogo(11)}</div>
        <div class="ssearch">${lens(10)}${f("Buscar", 26)}</div>
        <div class="stv">${taskView(11)}</div><div class="sbar"></div>
        ${sharedApps.map(([i, run, act]) => html`<div class="sapp ${run ? "run" : ""} ${act ? "act" : ""}"><div>${i}</div></div>`)}
        <div class="pct">${f("96%", 16)}</div>
        <div class="row tray">
          <svg width="13" height="8" viewBox="-2 0 13 8"><path d="M1 6L5 2L9 6" fill="none" stroke="currentColor"/></svg>
          <svg width="10" height="10" viewBox="0 0 10 10" fill="none" stroke="currentColor"><path d="M1 2.500H6V7.500H1ZM6 4L8.500 3V7L6 6M2 .5H6M2 9.500H6"/></svg>
          <svg width="10" height="10" viewBox="0 0 10 10" fill="none" stroke="currentColor"><path d="M4 7H2Q0 6 1 4.500Q2 2 4.500 2.500Q8 1 9 4"/><circle cx="7" cy="6.500" r="2.500" fill="#d8d8dc"/></svg>
          <svg width="10" height="11" viewBox="0 0 10 11"><rect x="3" y="0" width="4" height="7" rx="1.500"/><path d="M1.500 4.500Q1.500 8 5 8Q8.500 8 8.500 4.500M5 8V11" fill="none" stroke="#222"/></svg>
          <svg width="10" height="10" viewBox="0 0 10 10"><path d="M.5 .5H9.500V8.500H.5ZM6 2Q3 3 3 7" fill="none" stroke="#333"/><circle cx="8" cy="8" r="2" fill="#f0a020"/></svg>
          <svg width="11" height="8" viewBox="0 0 11 8"><path d="M0 1H3V2.500H10V6.500H4V4H0Z" fill="#222"/></svg>
          <svg width="9" height="9" viewBox="0 0 9 9" fill="none" stroke="#555"><path d="M.5 9Q.5 1 9 .5M3 9Q3 4 9 3.500M6 9Q6 6.500 9 6.500"/></svg>
          <svg width="11" height="9" viewBox="0 0 11 9" fill="none" stroke="#444"><path d="M.5 3H2L4.500 .5V8.500L2 6H.5ZM6.500 3Q7.500 4.500 6.500 6M8.300 1.500Q10.500 4.500 8.300 7.500"/></svg>
          <div class="tcol">${f("ENG", 14)}${f("LAA", 13)}</div>
          <div class="tcol" style="margin-left:3px">${f("10:54 AM", 30)}${f("6/2/2023", 29)}</div>
          <svg style="margin-left:6px" width="11" height="11" viewBox="0 0 11 11"><path d="M0 0H11V8H7L4 11V8H0Z" fill="#111"/><path d="M2 2.500H9M2 4.500H9M2 6.300H6" stroke="#ddd" stroke-width=".8"/></svg>
        </div>
      </div>
    </div>`;
  }

  private callBar() {
    return html`<div class="bar">
      <div class="rec"><svg width="16" height="16" viewBox="0 0 16 16"><circle cx="8" cy="8" r="7" fill="none" stroke="#fff" stroke-width="1.300"/><circle cx="8" cy="8" r="5" fill="#c4314b"/></svg>${f("01:51:10", 47)}</div>
      <div><svg width="22" height="22" viewBox="0 0 22 22"><rect x="1" y="4" width="14" height="14" rx="3" fill="#8c8c8c"/><path d="M16 9L21.500 5.500V16.500L16 13Z" fill="#8c8c8c"/><path d="M2 0L22 21.500" stroke="#404040" stroke-width="2"/><path d="M.5 .5L21 22" stroke="#979797" stroke-width="1.200"/></svg></div>
      <div><svg width="22" height="22" viewBox="0 0 22 22"><rect x="7.500" y="1" width="7" height="13" rx="3.500" fill="#8c8c8c"/><path d="M4 10Q4 17 11 17Q18 17 18 10M11 17V22" fill="none" stroke="#8c8c8c" stroke-width="1.200"/><path d="M2 0L22 21.500" stroke="#404040" stroke-width="2"/><path d="M.5 .5L21 22" stroke="#979797" stroke-width="1.200"/></svg></div>
      <div><svg width="22" height="18" viewBox="0 0 22 18" fill="none" stroke="#fff" stroke-width="1.500"><rect x=".8" y=".8" width="20.400" height="16.400" rx="2"/><path d="M11 14V4.500M7.500 7.800L11 4.300L14.500 7.800"/></svg></div>
      <div><svg width="18" height="4" viewBox="0 0 18 4" fill="#fff"><circle cx="2" cy="2" r="2"/><circle cx="9" cy="2" r="2"/><circle cx="16" cy="2" r="2"/></svg></div>
      <div class="hand"><svg width="18" height="22" viewBox="0 0 18 22" fill="none" stroke="#fff" stroke-width="1.300" stroke-linecap="round" stroke-linejoin="round"><path d="M3.500 12V4.500Q3.500 3 4.700 3Q6 3 6 4.500V9.500V2.500Q6 1 7.300 1Q8.500 1 8.500 2.500V9.500V2.500Q8.500 1.200 9.800 1.200Q11 1.200 11 2.500V9.500V4.500Q11 3.300 12.200 3.300Q13.500 3.300 13.500 4.500V12L15 10.500Q16.500 9.500 17.300 10.800L13 18Q11.500 21 8.500 21Q3.500 21 2 16Q1.500 13.500 1.500 9Q1.500 7 3.500 7"/></svg></div>
      <div class="chat"><svg width="23" height="23" viewBox="0 0 23 23" fill="none" stroke="#fff" stroke-width="1.500" stroke-linejoin="round" stroke-linecap="round"><path d="M1.500 21.500L2.800 16.500A10 10 0 1 1 6.800 20.400Z"/><path d="M8 9.500H15M8 13.500H12.500"/></svg></div>
      <div class="ppl"><svg width="22" height="22" viewBox="0 0 22 22" fill="none" stroke="#fff" stroke-width="1.400"><circle cx="8" cy="5" r="3.800"/><circle cx="17" cy="6.500" r="2.800"/><path d="M3 12H12.500Q14 12 14 13.500V15.500Q14 20.500 8 20.500Q1.500 20.500 1.500 15.500V13.500Q1.500 12 3 12ZM16 12H19Q21 12 21 14V16Q21 19 16.500 19"/></svg></div>
      <div class="hang"><svg width="22" height="10" viewBox="0 0 22 10"><path d="M11 .5Q17 .5 20.500 4Q22 6 21 8.500Q20.500 9.800 19 9.500L16 8.800Q14.800 8.500 14.800 7.200V5.500Q11 4 7.200 5.500V7.200Q7.200 8.500 6 8.800L3 9.500Q1.500 9.800 1 8.500Q0 6 1.500 4Q5 .5 11 .5Z" fill="#fff"/></svg></div>
    </div>`;
  }

  private chat() {
    return html`<div class="chatp">
      <div class="chead">${f("Chat de la reunión", 155)}<svg width="13" height="13" viewBox="0 0 13 13"><path d="M.5 .5L12.500 12.500M12.500 .5L.5 12.500" stroke="#555"/></svg></div>
      <div class="sys y1">${joinIcon}<div><div class="ln">${f("Byron (Invitado)", 88, "b")}${f(" y ", 12)}${f("ROGELIO MERO", 87, "b")}</div><div class="ln">${f("(Invitado)", 52, "b")}${f(" se han unido temporalmente al", 169)}</div><div class="ln">${f("chat.", 25)}</div></div></div>
      <div class="sys y2"><svg width="16" height="17" viewBox="0 0 16 16"><circle cx="8" cy="8" r="7.400" fill="none" stroke="#5b5fc7" stroke-width="1.100"/><circle cx="8" cy="8" r="4.500" fill="#5b5fc7"/></svg><div class="ln">${f("La grabación se ha iniciado", 143)}${f("9:05", 22)}</div></div>
      <div class="sys y3">${joinIcon}<div><div class="ln">${f("Arteaga Carlos (Invitado)", 136, "b")}${f(" y ", 12)}${f("Byron", 32, "b")}</div><div class="ln">${f("(Invitado)", 52, "b")}${f(" se han unido temporalmente al", 169)}</div><div class="ln">${f("chat.", 25)}</div></div></div>
      <div class="sys y4">${leaveIcon}<div class="ln">${f("Byron (Invitado)", 88, "b")}${f(" ya no tiene acceso al chat.", 141)}</div></div>
      <div class="m m1"><div class="av lav">B</div><div class="card c-a"><div class="hd">${f("Byron (Invitado)", 88, "b")}${f("9:18", 22, "t")}</div><div class="tx">${f("AplicacionEscrituraArchivo", 162)}</div></div></div>
      <div class="m m2"><div class="av grn">EM</div><div class="card c-b"><div class="hd">${f("Emilio Vera Meza", 93, "b")}${f("9:53", 22, "t")}</div>
        <div class="tx">${f("srv-", 22)}</div><div class="tx">${f("desarrollo.coop15abril.fin.ec:19", 191)}</div><div class="tx">${f("89", 15)}</div><div class="tx">${f("desanodo", 61)}</div><div class="tx">${f("as_prg/", 46)}${f("asi_e", 29, "sel")}</div>
        <div class="more">${f("Ver menos", 56)}</div></div></div>
      <div class="fill"></div>
      <div class="compose">${f("Escribe un mensaje nuevo", 159)}</div>
      <div class="tools"><svg width="17" height="16" viewBox="0 0 17 16" fill="none" stroke="#616161"><path d="M.5 10L4 .8L7.200 8M1.800 6.500H6"/><path d="M5 15.500L6 11.500L13 4.500Q14.500 3.500 15.700 4.700Q16.700 6 15.500 7.300L8.500 14.300Z"/></svg><svg width="17" height="16" viewBox="0 0 17 16" fill="none" stroke="#616161" stroke-linejoin="round"><path d="M.7 .8L16.300 8L.7 15.200L3 8ZM3 8H10"/></svg></div>
    </div>`;
  }

  render() {
    return html`<div class="page">
      <div class="win"><svg width="12" height="12" viewBox="0 0 12 12"><path d="M0 5.500H12" stroke="#fff"/></svg><svg width="14" height="14" viewBox="0 0 14 14" fill="none" stroke="#fff"><path d="M.5 2.500H11.500V13.500H.5ZM2.500 2.500V.5H13.500V11.500H11.500"/></svg><svg width="12" height="12" viewBox="0 0 12 12"><path d="M0 0L12 12M12 0L0 12" stroke="#fff" stroke-width="1.100"/></svg></div>
      <div class="banner"><svg width="16" height="15" viewBox="0 0 16 15"><path d="M8 0Q8.800 0 9.300 1L15.800 13Q16.200 15 14.500 15H1.500Q-.2 15 .2 13L6.700 1Q7.200 0 8 0Z" fill="#fff"/><path d="M8 4.500V10" stroke="#30365d" stroke-width="1.500"/><circle cx="8" cy="12" r=".9" fill="#30365d"/></svg>
        ${f("La transcripción se ha detenido", 204, "b")}${f("Ahora solo estás grabando esta reunión.", 248.5)}<div class="dismiss">${f("Descartar", 60)}</div></div>
      <div class="body">
        <div class="left">
          <div class="stage">${this.share()}</div>
          <div class="strip">
            <div class="first"><div class="av lav">${f("MS", 24)}</div></div>
            ${this.tile("AC", "blu", "Arteaga Carlos (Invit...", 116, "a0")}
            ${this.tile("RH", "pin", "Ramiro J. Castillo Her...", 120.5, "a1", "g8")}
            ${this.tile("AV", "cya", "Angelica Vera", 72, "a2", "g8")}
            ${this.tile("EM", "grn", "Emilio Vera Meza", 91, "a3", "g8")}
            ${this.tile("B", "lav", "Byron (Invitado)", 84, "me")}
          </div>
          <div class="who">${f("Byron (Invitado)", 84)}</div>
          <div class="sharing"><svg width="4" height="8" viewBox="0 0 4 8"><path d="M.7 0V8M3.300 0V8" stroke="#ddd"/></svg>${f("teams.microsoft.com está compartiendo tu pantalla.", 169, "msg")}<div class="stop">${f("Dejar de compartir", 63)}</div>${f("Ocultar", 24)}</div>
          ${this.callBar()}
        </div>
        ${this.chat()}
      </div>
      <div class="task">
        <div class="start">${winLogo(16)}</div>
        <div class="search">${lens(16)}${f("Buscar", 43, "q")}<div class="hl"><svg width="30" height="24" viewBox="0 0 30 24"><path d="M10 4Q10 1 13 1H17Q20 1 20 4" fill="none" stroke="#1c1c1c" stroke-width="2.500"/><rect y="3.500" width="30" height="20.500" rx="1" fill="#c26a00"/><path d="M0 4.500Q0 3.500 1 3.500H29Q30 3.500 30 4.500V14H0Z" fill="#f0930a"/><rect x="12" y="12" width="6" height="6" rx="1" fill="#ffd82c"/><rect x="14" y="14" width="2" height="2" fill="#a87000"/></svg></div></div>
        <div class="tv">${taskView(17)}</div>
        ${hostApps.map((a) => html`<div class="app ${a.run ? "run" : ""} ${a.active ? "act" : ""}" style="width:${a.w}px"><div>${a.icon}</div></div>`)}
        <div class="row wx"><svg width="23" height="24" viewBox="0 0 23 24"><defs><linearGradient id="sn" x2=".6" y2="1"><stop stop-color="#f9b22c"/><stop offset="1" stop-color="#f26f0c"/></linearGradient></defs><circle cx="10.500" cy="13" r="10" fill="url(#sn)"/><circle cx="19.500" cy="3.500" r="3.200" fill="#cc2a20"/></svg>${f("29°C", 29)}${f("Soleado", 50)}</div>
        <div class="row tr"><svg width="12" height="7" viewBox="0 0 12 7"><path d="M.5 6.500L6 1L11.500 6.500" fill="none" stroke="#fff" stroke-width="1.200"/></svg>
          <svg style="margin-left:10px" width="16" height="14" viewBox="0 0 16 14" fill="none" stroke="#fff"><path d="M5 1.500H15.500V9.500H3.500V6M9.500 9.500V13M5.500 13H12.500M.5 1H4.500V4.500H.5ZM2.500 4.500V6"/></svg>
          <svg style="margin-left:8.500px" width="15" height="13" viewBox="0 0 15 13" fill="none" stroke="#fff"><path d="M.5 4.500H2.500L6 1V12L2.500 8.500H.5ZM9 4L14 9M14 4L9 9"/></svg>
          <span style="margin-left:12.500px">${f("ESP", 18)}</span></div>
        <div class="clock">${f("10:54", 26)}${f("2/6/2023", 46)}</div>
        <div class="note"><svg width="26" height="26" viewBox="0 0 26 26"><path d="M1 2H17V14H10L6 18V14H1Z" fill="#fff"/><path d="M4 5.500H14M4 8.200H14M4 11H9" stroke="#333"/><circle cx="16.500" cy="17" r="8" fill="#3a3d3a" stroke="#999"/><text x="16.500" y="21" text-anchor="middle" font-family="Noto Sans" font-weight="600" font-size="11" fill="#fff">5</text></svg></div>
        <div class="desk"></div>
      </div>
    </div>`;
  }
}
customElements.define("app-root", AppRoot);
